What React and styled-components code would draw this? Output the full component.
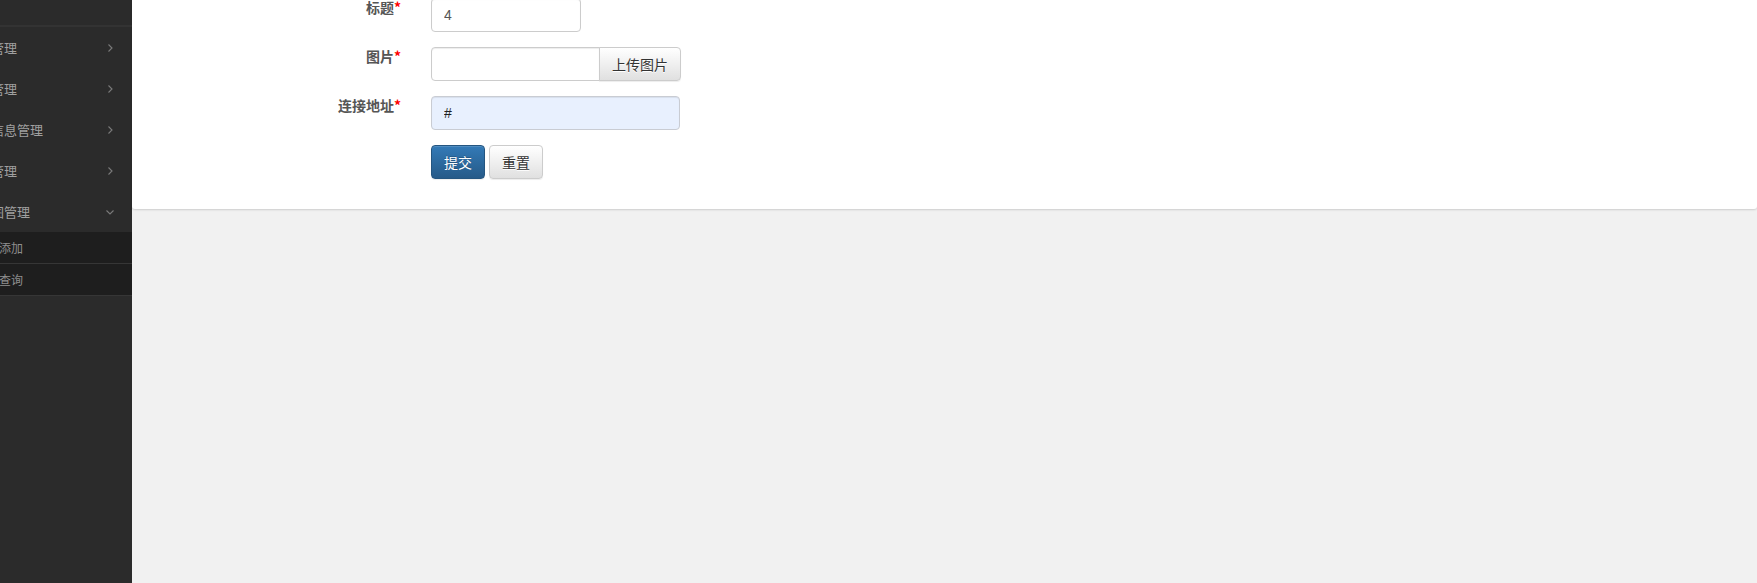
import React from "react";
import styled, { createGlobalStyle } from "styled-components";

const Global = createGlobalStyle`
  html, body { margin: 0; padding: 0; height: 100%; overflow: hidden; }
  body {
    background: #f1f1f1;
    font-family: "Liberation Sans", "Noto Sans CJK SC", sans-serif;
    font-size: 14px;
    color: #333;
  }
`;

const Layout = styled.div`
  display: flex;
  height: 583px;
  width: 1757px;
  overflow: hidden;
`;

const Sidebar = styled.aside`
  width: 132px;
  flex: 0 0 132px;
  background: #2b2b2b;
  overflow: hidden;
  display: flex;
  flex-direction: column;
`;

const SideHeader = styled.div`
  height: 25px;
  border-bottom: 2px solid #333;
`;

const MenuItem = styled.div`
  height: 41px;
  display: flex;
  align-items: center;
  justify-content: space-between;
  padding-right: 18px;
  color: #a0a0a0;
  font-size: 13px;
  font-family: "Noto Sans CJK SC", sans-serif;
  white-space: nowrap;
`;

const MenuText = styled.span`
  margin-left: -35px;
  line-height: 1;
`;

const SubMenu = styled.div`
  background: #1e1e1e;
`;

const SubItem = styled.div`
  height: 31px;
  display: flex;
  align-items: center;
  border-bottom: 1px solid #363636;
  color: #8f8f8f;
  font-size: 12px;
  font-family: "Noto Sans CJK SC", sans-serif;
  white-space: nowrap;
`;

const SubText = styled.span`
  margin-left: -37px;
`;

const Chevron = ({ down }) => (
  <svg width="8" height="8" viewBox="0 0 8 8" style={{ flex: "none" }}>
    {down ? (
      <path d="M0.5 2.5 L4 6 L7.5 2.5" fill="none" stroke="#7a7a7a" strokeWidth="1.1" />
    ) : (
      <path d="M2.5 0.5 L6 4 L2.5 7.5" fill="none" stroke="#7a7a7a" strokeWidth="1.1" />
    )}
  </svg>
);

const Main = styled.main`
  flex: 1;
  background: #f1f1f1;
`;

const Panel = styled.section`
  background: #fff;
  border-radius: 0 0 3px 3px;
  box-shadow: 0 1px 2px rgba(0, 0, 0, 0.15);
  margin-top: -2px;
  padding: 0 0 30px 0;
`;

const Form = styled.form`
  display: flex;
  flex-direction: column;
  gap: 15px;
  margin: 0;
`;

const Row = styled.div`
  display: flex;
  align-items: flex-start;
`;

const LABEL_W = 299;

const Label = styled.label`
  width: ${LABEL_W}px;
  flex: none;
  text-align: right;
  padding-top: 2px;
  padding-right: 30px;
  box-sizing: border-box;
  font-family: "Noto Sans CJK SC", sans-serif;
  font-weight: bold;
  font-size: 14px;
  line-height: 14px;
  color: #555;
`;

const Req = styled.span`
  color: #f00;
  font-weight: bold;
`;

const Input = styled.input`
  box-sizing: border-box;
  width: ${(p) => p.$w}px;
  height: 34px;
  padding: 6px 12px;
  font-size: 14px;
  font-family: "Liberation Sans", "Noto Sans CJK SC", sans-serif;
  color: ${(p) => (p.$filled ? "#222" : "#555")};
  background: ${(p) => (p.$filled ? "#e8f0fe" : "#fff")};
  border: 1px solid ${(p) => (p.$filled ? "#c9ccd3" : "#ccc")};
  border-radius: ${(p) => (p.$group ? "4px 0 0 4px" : "4px")};
  box-shadow: inset 0 1px 1px rgba(0, 0, 0, 0.075);
  outline: none;
`;

const Group = styled.div`
  display: flex;
`;

const Btn = styled.button`
  box-sizing: border-box;
  height: 34px;
  padding: 6px 0;
  font-size: 14px;
  font-family: "Noto Sans CJK SC", sans-serif;
  line-height: 20px;
  white-space: nowrap;
  text-align: center;
  cursor: pointer;
  border-radius: ${(p) => (p.$group ? "0 4px 4px 0" : "4px")};
  ${(p) => p.$group && "margin-left: -1px;"}
  width: ${(p) => p.$w}px;
  ${(p) =>
    p.$primary
      ? `
    color: #fff;
    background: linear-gradient(to bottom, #337ab7 0%, #265a88 100%);
    border: 1px solid #245580;
    text-shadow: 0 -1px 0 rgba(0,0,0,0.2);
    box-shadow: inset 0 1px 0 rgba(255,255,255,0.15), 0 1px 1px rgba(0,0,0,0.075);
  `
      : `
    color: #333;
    background: linear-gradient(to bottom, #fff 0%, #e0e0e0 100%);
    border: 1px solid #ccc;
    text-shadow: 0 1px 0 #fff;
    box-shadow: inset 0 1px 0 rgba(255,255,255,0.15), 0 1px 1px rgba(0,0,0,0.075);
  `}
`;

const Actions = styled.div`
  display: flex;
  gap: 4px;
  margin-left: ${LABEL_W}px;
`;

const menus = ["用户管理", "分类管理", "新闻信息管理", "留言管理"];

export default function App() {
  return (
    <>
      <Global />
      <Layout>
        <Sidebar>
          <SideHeader />
          {menus.map((m) => (
            <MenuItem key={m}>
              <MenuText>{m}</MenuText>
              <Chevron />
            </MenuItem>
          ))}
          <MenuItem>
            <MenuText>轮播图管理</MenuText>
            <Chevron down />
          </MenuItem>
          <SubMenu>
            <SubItem>
              <SubText>轮播图添加</SubText>
            </SubItem>
            <SubItem>
              <SubText>轮播图查询</SubText>
            </SubItem>
          </SubMenu>
        </Sidebar>
        <Main>
          <Panel>
            <Form onSubmit={(e) => e.preventDefault()}>
              <Row>
                <Label>
                  标题<Req>*</Req>
                </Label>
                <Input $w={150} defaultValue="4" />
              </Row>
              <Row>
                <Label>
                  图片<Req>*</Req>
                </Label>
                <Group>
                  <Input $w={169} $group />
                  <Btn type="button" $group $w={82}>
                    上传图片
                  </Btn>
                </Group>
              </Row>
              <Row>
                <Label>
                  连接地址<Req>*</Req>
                </Label>
                <Input $w={249} $filled defaultValue="#" />
              </Row>
              <Actions>
                <Btn type="submit" $primary $w={54}>
                  提交
                </Btn>
                <Btn type="reset" $w={54}>
                  重置
                </Btn>
              </Actions>
            </Form>
          </Panel>
        </Main>
      </Layout>
    </>
  );
}
